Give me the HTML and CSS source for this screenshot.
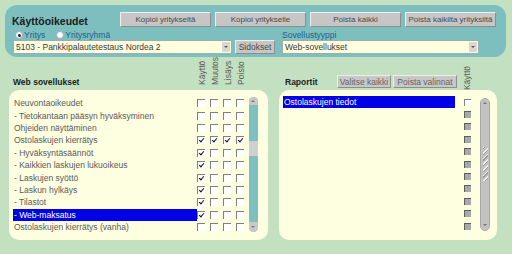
FILE: index.html
```html
<!DOCTYPE html>
<html lang="fi">
<head>
    <meta charset="UTF-8">
    <title>Käyttöoikeudet</title>
    <link rel="stylesheet" href="styles.css">
</head>
<body>
    <div class="top">
        <div class="top-row">
            <h1 class="title">Käyttöoikeudet</h1>
            <div class="top-buttons">
                <button class="btn">Kopioi yritykseltä</button>
                <button class="btn">Kopioi yritykselle</button>
                <button class="btn">Poista kaikki</button>
                <button class="btn">Poista kaikilta yrityksiltä</button>
            </div>
        </div>
        <div class="pick">
            <div class="radios">
                <span class="radio"><span class="dot on"></span>Yritys</span>
                <span class="radio"><span class="dot"></span>Yritysryhmä</span>
            </div>
            <div class="field-label">Sovellustyyppi</div>
            <div class="company">
                <div class="select sel-company"><span class="sel-text">5103 - Pankkipalautetestaus Nordea 2</span><span class="arrow"></span></div>
                <button class="btn btn-small">Sidokset</button>
            </div>
            <div class="select sel-type"><span class="sel-text">Web-sovellukset</span><span class="arrow"></span></div>
        </div>
    </div>

    <div class="lower">
        <!-- Web sovellukset -->
        <div class="apps">
            <div class="apps-head">
                <h2 class="sub">Web sovellukset</h2>
                <div class="vheads">
                    <span class="vh">Käyttö</span>
                    <span class="vh">Muutos</span>
                    <span class="vh">Lisäys</span>
                    <span class="vh">Poisto</span>
                </div>
            </div>
            <div class="panel apps-panel">
                <div id="appRows" class="rows"></div>
                <div class="scroll teal">
                    <span class="cap cap-up"></span>
                    <span class="track" style="height: 36px"></span>
                    <span class="thumb"></span>
                    <span class="track grow"></span>
                    <span class="cap cap-down"></span>
                </div>
            </div>
        </div>

        <!-- Raportit -->
        <div class="reports">
            <div class="reports-head">
                <h2 class="sub">Raportit</h2>
                <button class="btn btn-mini btn-select">Valitse kaikki</button>
                <button class="btn btn-mini btn-clear">Poista valinnat</button>
                <span class="vh vh-report">Käyttö</span>
            </div>
            <div class="panel reports-panel">
                <div id="reportRows" class="rows"></div>
                <div class="scroll gray">
                    <span class="cap cap-up"></span>
                    <span class="grip-area"><span class="grip"></span></span>
                    <span class="cap cap-down"></span>
                </div>
            </div>
        </div>
    </div>

    <script>
        const apps = [
            ["Neuvontaoikeudet", [0, 0, 0, 0]],
            ["- Tietokantaan pääsyn hyväksyminen", [0, 0, 0, 0]],
            ["Ohjeiden näyttäminen", [0, 0, 0, 0]],
            ["Ostolaskujen kierrätys", [1, 1, 1, 1]],
            ["- Hyväksyntäsäännöt", [1, 0, 0, 0]],
            ["- Kaikkien laskujen lukuoikeus", [1, 0, 0, 0]],
            ["- Laskujen syöttö", [1, 0, 0, 0]],
            ["- Laskun hylkäys", [1, 0, 0, 0]],
            ["- Tilastot", [1, 0, 0, 0]],
            ["- Web-maksatus", [1, 0, 0, 0], true],
            ["Ostolaskujen kierrätys (vanha)", [0, 0, 0, 0]]
        ];

        const appRows = document.getElementById("appRows");
        apps.forEach(function (app) {
            let row = document.createElement("div");
            row.className = "row";
            let html = `<span class="name${app[2] ? " selected" : ""}">${app[0]}</span>`;
            app[1].forEach(function (v) {
                html += `<span class="cell"><span class="cb${v ? " checked" : ""}"></span></span>`;
            });
            row.innerHTML = html;
            appRows.appendChild(row);
        });

        const reportRows = document.getElementById("reportRows");
        for (let i = 0; i < 11; i++) {
            let row = document.createElement("div");
            row.className = "row";
            let name = i == 0 ? `<span class="name selected">Ostolaskujen tiedot</span>` : `<span class="name"></span>`;
            row.innerHTML = name + `<span class="cell"><span class="cb${i == 0 ? "" : " off"}"></span></span>`;
            reportRows.appendChild(row);
        }
    </script>
</body>
</html>
```

FILE: styles.css
```css
* {
    margin: 0;
    padding: 0;
    box-sizing: border-box;
    font-family: "Liberation Sans", Arial, sans-serif;
}

body {
    background: #c3e1c1;
    width: 512px;
    height: 254px;
    overflow: hidden;
    font-size: 8.5px;
    color: #5a5a5a;
}

/* Top panel */
.top {
    margin: 5px 6px 0 5px;
    height: 52px;
    background: #7dbebe;
    border-radius: 12px;
    padding: 7px 10px 0 7px;
}

.top-row {
    display: flex;
    align-items: center;
    height: 15px;
}

.title {
    width: 108px;
    font-size: 10.5px;
    font-weight: bold;
    color: #1c1c1c;
    padding-top: 3px;
}

.top-buttons {
    display: flex;
    gap: 4px;
}

.btn {
    background: #c6c6c6;
    color: #484848;
    font-size: 8px;
    border: 1px solid;
    border-color: #eeeeee #8e8e8e #8e8e8e #eeeeee;
    height: 15px;
    width: 91px;
    padding: 0;
    white-space: nowrap;
    cursor: pointer;
}

.pick {
    display: grid;
    grid-template-columns: 262px 197px;
    grid-template-rows: 10px 14px;
    column-gap: 7px;
    margin: 3px 0 0 1px;
}

.radios {
    display: flex;
    gap: 11px;
    padding-left: 2px;
    align-items: center;
}

.radio, .field-label {
    color: #22628c;
    display: flex;
    align-items: center;
    line-height: 10px;
}

.dot {
    width: 8px;
    height: 8px;
    border-radius: 50%;
    background: #fff;
    border: 1px solid #9ab;
    margin-right: 1px;
    position: relative;
}

.dot.on::after {
    content: "";
    position: absolute;
    left: 1.5px;
    top: 1.5px;
    width: 3px;
    height: 3px;
    border-radius: 50%;
    background: #222;
}

.company {
    display: flex;
    gap: 3px;
}

.select {
    height: 14px;
    background: #ffffe0;
    border: 1px solid #9aaeae;
    display: flex;
    align-items: center;
    justify-content: space-between;
    color: #3a3a3a;
    font-size: 8.5px;
    padding: 0 1px 0 2px;
}

.sel-company {
    width: 219px;
}

.sel-type {
    width: 197px;
}

.arrow {
    width: 8px;
    height: 10px;
    background: #d8d8d0;
    position: relative;
}

.arrow::after {
    content: "";
    position: absolute;
    left: 2px;
    top: 4px;
    border: 2px solid transparent;
    border-top: 2px solid #555;
}

.btn-small {
    width: 40px;
    height: 14px;
    font-size: 8.5px;
}

/* Lower part */
.lower {
    display: flex;
    gap: 11px;
    padding: 3px 0 0 9px;
}

.apps {
    width: 259px;
}

.reports {
    width: 218px;
}

.apps-head, .reports-head {
    height: 30px;
    display: flex;
    align-items: flex-end;
}

.sub {
    font-size: 8.5px;
    font-weight: bold;
    color: #1c1c1c;
    padding: 0 0 3px 4px;
}

.apps-head .sub {
    width: 188px;
}

.vheads {
    display: flex;
    padding-bottom: 5px;
}

.vh {
    writing-mode: vertical-rl;
    transform: rotate(180deg);
    width: 13px;
    line-height: 10px;
    color: #5a5a5a;
}

.panel {
    height: 150px;
    background: #fefee0;
    border-radius: 10px;
    display: flex;
    align-items: flex-start;
}

.apps-panel {
    padding: 7px 0 0 4px;
}

.rows {
    display: flex;
    flex-direction: column;
}

.row {
    height: 12.4px;
    display: flex;
    align-items: center;
}

.apps .name {
    width: 184px;
}

.name {
    height: 12px;
    line-height: 12px;
    padding-left: 1px;
    white-space: nowrap;
}

.name.selected {
    background: #0000e6;
    color: #fff;
}

.apps .cell {
    width: 13px;
    display: flex;
}

.cb {
    width: 8px;
    height: 8px;
    background: #fff;
    border-top: 1px solid #808080;
    border-left: 1px solid #808080;
    position: relative;
}

.cb.checked::after {
    content: "";
    position: absolute;
    left: 2px;
    top: 0;
    width: 2px;
    height: 4px;
    border: solid #111;
    border-width: 0 1.5px 1.5px 0;
    transform: rotate(40deg);
}

.cb.off {
    background: #a9a9a9;
    border-color: #5e5e5e;
}

/* Scrollbars */
.scroll {
    width: 9px;
    height: 135px;
    border-radius: 5px;
    display: flex;
    flex-direction: column;
    overflow: hidden;
}

.scroll.teal {
    background: #7fbfbf;
}

.scroll.gray {
    background: #c2c2c2;
    border: 1px solid #a8a8a8;
}

.cap {
    height: 8px;
    background: #c8c8c8;
    position: relative;
    flex: none;
}

.cap-up {
    border-radius: 5px 5px 0 0;
}

.cap-down {
    border-radius: 0 0 5px 5px;
    height: 10px;
}

.cap::after {
    content: "";
    position: absolute;
    left: 2px;
    border: 2px solid transparent;
}

.cap-up::after {
    top: 1px;
    border-bottom: 2px solid #777;
}

.cap-down::after {
    top: 4px;
    border-top: 2px solid #777;
}

.track {
    flex: none;
}

.track.grow {
    flex: 1;
}

.thumb {
    height: 15px;
    background: #cfcfcf;
    flex: none;
}

.gray .cap {
    background: #c2c2c2;
}

.grip-area {
    flex: 1;
    display: flex;
    align-items: center;
    justify-content: center;
}

.grip {
    width: 5px;
    height: 34px;
    background: repeating-linear-gradient(135deg, #eee 0 1px, #999 1px 2px, transparent 2px 4px);
}

/* Reports */
.reports-head .sub {
    width: 58px;
    padding-left: 6px;
}

.btn-mini {
    height: 13px;
    font-size: 8.5px;
    margin-bottom: 2px;
    color: #666;
    background: #c8c8c8;
}

.btn-select {
    width: 54px;
}

.btn-clear {
    width: 64px;
    margin-left: 2px;
}

.vh-report {
    margin-left: 5px;
    padding-bottom: 2px;
}

.reports-panel {
    padding: 6px 0 0 4px;
}

.reports .name {
    width: 172px;
}

.reports .cell {
    width: 25px;
    display: flex;
    padding-left: 9px;
}

.reports .cb {
    width: 7px;
    height: 7px;
}

.reports .scroll {
    margin-top: 2px;
    width: 10px;
    height: 133px;
}
```
